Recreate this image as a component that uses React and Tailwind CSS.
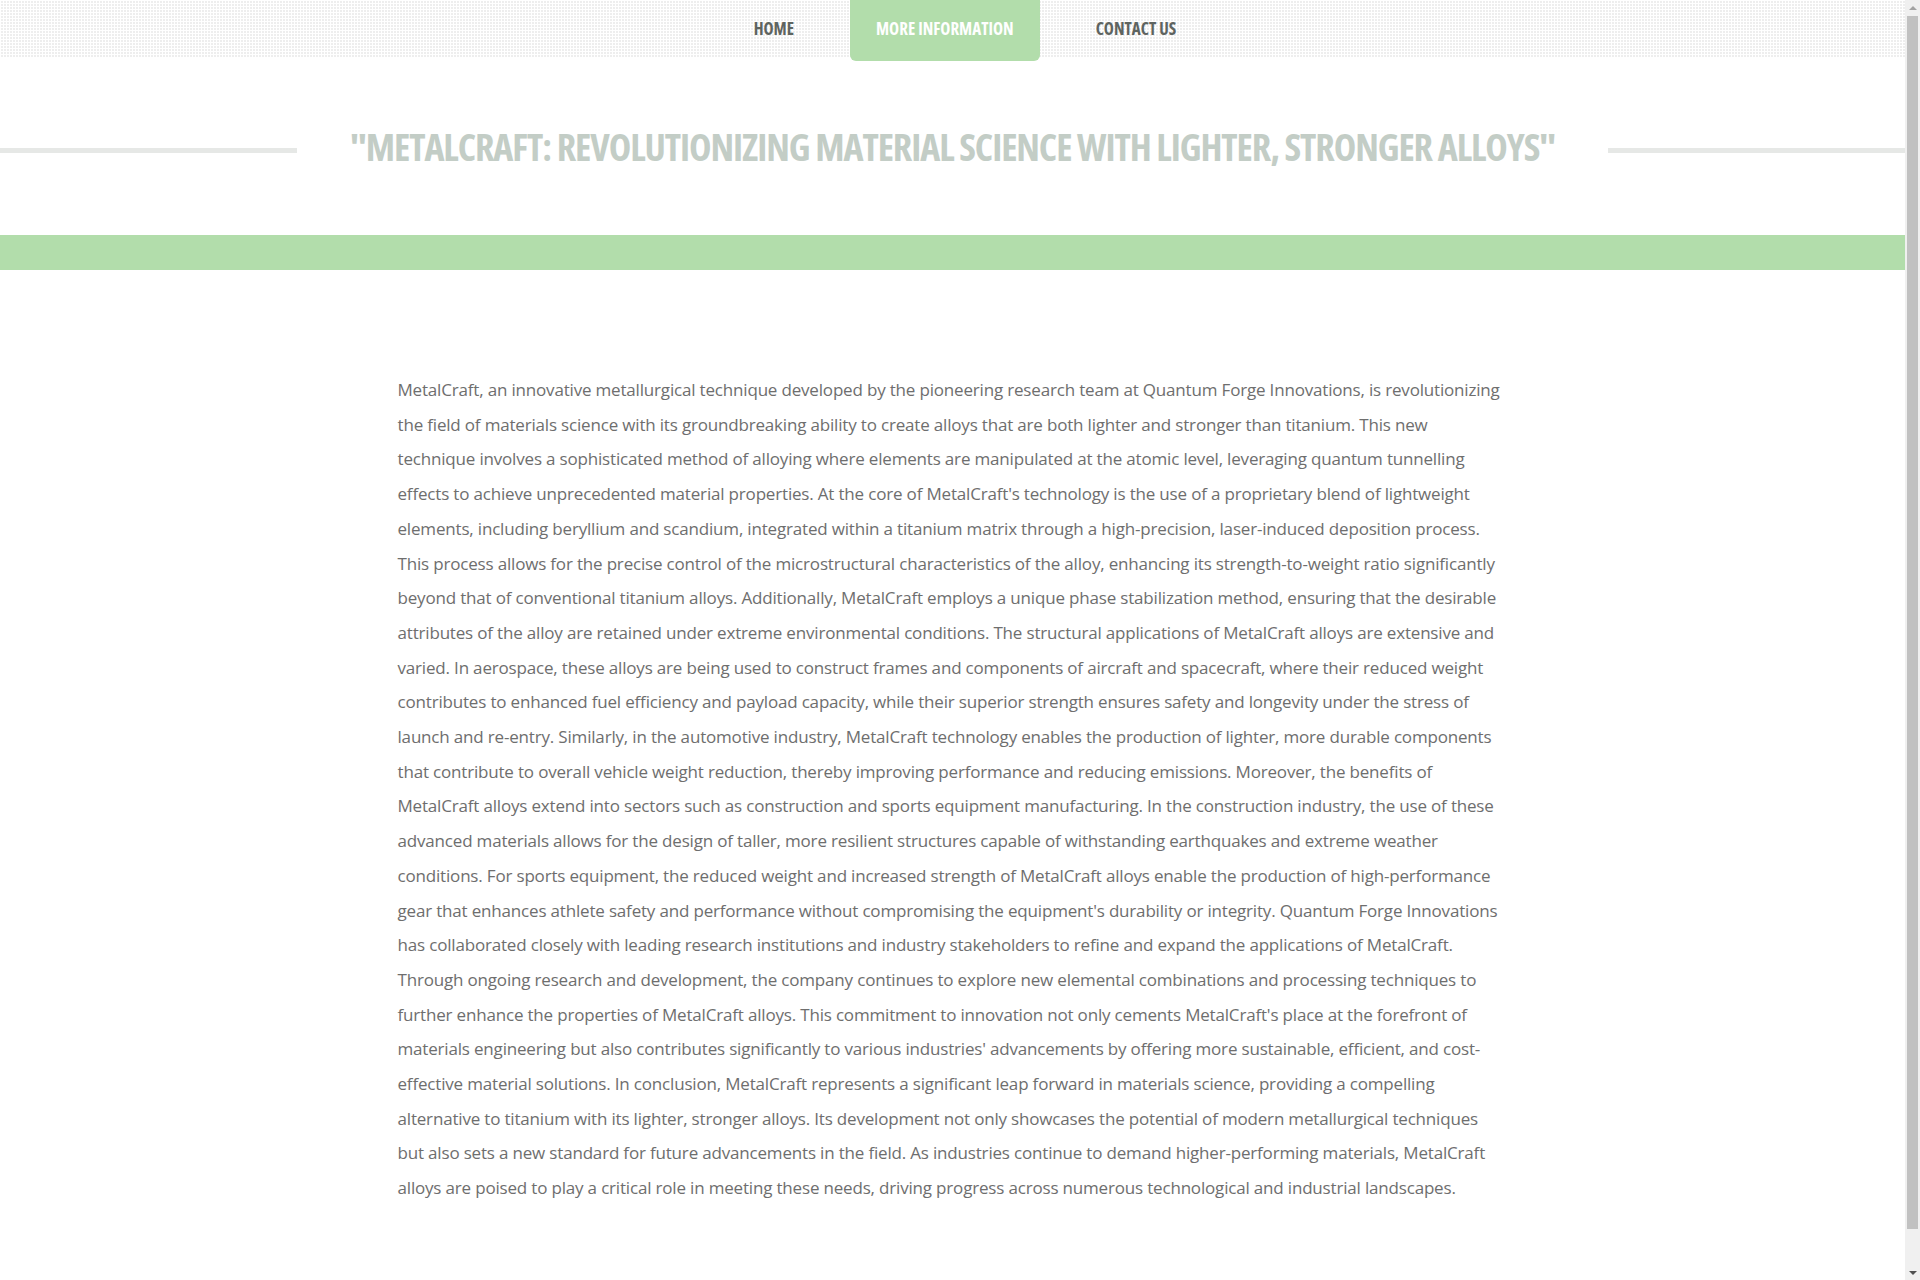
import React from "react";

const body =
  "MetalCraft, an innovative metallurgical technique developed by the pioneering research team at Quantum Forge Innovations, is revolutionizing the field of materials science with its groundbreaking ability to create alloys that are both lighter and stronger than titanium. This new technique involves a sophisticated method of alloying where elements are manipulated at the atomic level, leveraging quantum tunnelling effects to achieve unprecedented material properties. At the core of MetalCraft's technology is the use of a proprietary blend of lightweight elements, including beryllium and scandium, integrated within a titanium matrix through a high-precision, laser-induced deposition process. This process allows for the precise control of the microstructural characteristics of the alloy, enhancing its strength-to-weight ratio significantly beyond that of conventional titanium alloys. Additionally, MetalCraft employs a unique phase stabilization method, ensuring that the desirable attributes of the alloy are retained under extreme environmental conditions. The structural applications of MetalCraft alloys are extensive and varied. In aerospace, these alloys are being used to construct frames and components of aircraft and spacecraft, where their reduced weight contributes to enhanced fuel efficiency and payload capacity, while their superior strength ensures safety and longevity under the stress of launch and re-entry. Similarly, in the automotive industry, MetalCraft technology enables the production of lighter, more durable components that contribute to overall vehicle weight reduction, thereby improving performance and reducing emissions. Moreover, the benefits of MetalCraft alloys extend into sectors such as construction and sports equipment manufacturing. In the construction industry, the use of these advanced materials allows for the design of taller, more resilient structures capable of withstanding earthquakes and extreme weather conditions. For sports equipment, the reduced weight and increased strength of MetalCraft alloys enable the production of high-performance gear that enhances athlete safety and performance without compromising the equipment's durability or integrity. Quantum Forge Innovations has collaborated closely with leading research institutions and industry stakeholders to refine and expand the applications of MetalCraft. Through ongoing research and development, the company continues to explore new elemental combinations and processing techniques to further enhance the properties of MetalCraft alloys. This commitment to innovation not only cements MetalCraft's place at the forefront of materials engineering but also contributes significantly to various industries' advancements by offering more sustainable, efficient, and cost-effective material solutions. In conclusion, MetalCraft represents a significant leap forward in materials science, providing a compelling alternative to titanium with its lighter, stronger alloys. Its development not only showcases the potential of modern metallurgical techniques but also sets a new standard for future advancements in the field. As industries continue to demand higher-performing materials, MetalCraft alloys are poised to play a critical role in meeting these needs, driving progress across numerous technological and industrial landscapes.";

function Scrollbar() {
  return (
    <div className="fixed right-0 top-0 flex h-screen w-[15px] flex-col items-center bg-[#f0f0f0]">
      <div className="flex h-[15px] w-full items-center justify-center">
        <div className="h-0 w-0 border-x-[4px] border-b-[4px] border-x-transparent border-b-[#a3a3a3]" />
      </div>
      <div className="mt-px h-[1213px] w-[11px] bg-[#c1c1c1]" />
      <div className="flex-1" />
      <div className="flex h-[15px] w-full items-center justify-center">
        <div className="h-0 w-0 border-x-[4px] border-t-[4px] border-x-transparent border-t-[#505050]" />
      </div>
    </div>
  );
}

export default function App() {
  return (
    <div className="w-[1905px] min-h-[1280px] bg-white font-['Open_Sans',sans-serif]">
      <header className="h-[57px] bg-[#eeeeee] bg-[linear-gradient(90deg,#ffffff_1px,transparent_1px),linear-gradient(#ffffff_1px,transparent_1px)] bg-[length:3px_3px]">
        <nav className="flex items-start justify-center gap-[30px] pl-[25px] text-[17px] font-bold uppercase font-stretch-condensed">
          <a className="flex h-[57px] items-center px-[26px] text-[#5e6460]">Home</a>
          <a className="flex h-[61px] items-center rounded-b-[6px] bg-[#b2ddab] px-[26px] pb-[3px] text-white">
            More Information
          </a>
          <a className="flex h-[57px] items-center px-[26px] text-[#5e6460]">Contact Us</a>
        </nav>
      </header>

      <section className="flex h-[178px] items-center">
        <div className="mt-[9px] h-[5px] w-[297px] shrink-0 bg-[#e6e8e6]" />
        <h1 className="shrink-0 px-[53px] text-[38px] font-bold uppercase leading-none tracking-[-1.07px] text-[#c3cdc6] font-stretch-condensed">
          "MetalCraft: Revolutionizing Material Science with Lighter, Stronger Alloys"
        </h1>
        <div className="mt-[9px] h-[5px] flex-1 bg-[#e6e8e6]" />
      </section>

      <div className="h-[35px] bg-[#b2ddab]" />

      <main className="mx-auto w-[1110px] pb-[40px] pt-[103px]">
        <p className="text-[17px] leading-[34.7px] tracking-[-0.18px] text-[#6e6e6e]">{body}</p>
      </main>

      <Scrollbar />
    </div>
  );
}
